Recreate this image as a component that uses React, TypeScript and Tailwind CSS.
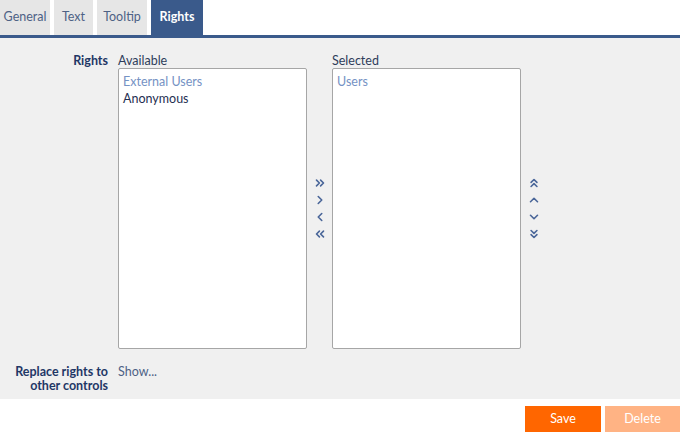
import React from 'react';
import {
  ChevronsRight,
  ChevronRight,
  ChevronLeft,
  ChevronsLeft,
  ChevronsUp,
  ChevronUp,
  ChevronDown,
  ChevronsDown,
} from 'lucide-react';

const tabs = [
  { label: 'General', w: 'w-[50px]' },
  { label: 'Text', w: 'w-[39px]' },
  { label: 'Tooltip', w: 'w-[50px]' },
  { label: 'Rights', w: 'w-[52px]' },
];

const ArrowButton: React.FC<{ children: React.ReactNode }> = ({ children }) => (
  <button className="flex h-[17px] w-[16px] items-center justify-center text-[#4a6699]">{children}</button>
);

const App: React.FC = () => {
  return (
    <div className="flex h-[432px] w-[680px] flex-col overflow-hidden bg-white font-['Lato','Liberation_Sans',sans-serif] text-[12.5px]">
      <div className="flex h-[35px] gap-[4px]">
        {tabs.map((t) => (
          <div
            key={t.label}
            className={
              t.label === 'Rights'
                ? `flex ${t.w} items-center justify-center bg-[#3a5a8b] font-bold text-white`
                : `flex ${t.w} items-center justify-center bg-[#e6e6e6] text-[#4d6185]`
            }
          >
            {t.label}
          </div>
        ))}
      </div>
      <div className="h-[3px] bg-[#3a5a8b]" />

      <main className="h-[362px] bg-[#f0f0f0] pt-[15px]">
        <div className="grid grid-cols-[108px_1fr] gap-x-[10px]">
          <div className="text-right font-bold leading-[15px] text-[#1f3766]">Rights</div>
          <div className="flex">
            <div className="flex flex-col">
              <div className="h-[15px] leading-[15px] text-[#2e3d5a]">Available</div>
              <div className="h-[281px] w-[189px] rounded-[2px] border border-[#a6a6a6] bg-white px-[4px] pt-[4px] leading-[17px]">
                <div className="text-[#7592c4]">External Users</div>
                <div className="text-[#1f2f52]">Anonymous</div>
              </div>
            </div>
            <div className="mt-[15px] flex w-[25px] flex-col items-center justify-center">
              <ArrowButton><ChevronsRight size={14} strokeWidth={2.75} /></ArrowButton>
              <ArrowButton><ChevronRight size={14} strokeWidth={2.75} /></ArrowButton>
              <ArrowButton><ChevronLeft size={14} strokeWidth={2.75} /></ArrowButton>
              <ArrowButton><ChevronsLeft size={14} strokeWidth={2.75} /></ArrowButton>
            </div>
            <div className="flex flex-col">
              <div className="h-[15px] leading-[15px] text-[#2e3d5a]">Selected</div>
              <div className="h-[281px] w-[189px] rounded-[2px] border border-[#a6a6a6] bg-white px-[4px] pt-[4px] leading-[17px]">
                <div className="text-[#7592c4]">Users</div>
              </div>
            </div>
            <div className="mt-[15px] flex w-[26px] flex-col items-center justify-center">
              <ArrowButton><ChevronsUp size={14} strokeWidth={2.75} /></ArrowButton>
              <ArrowButton><ChevronUp size={14} strokeWidth={2.75} /></ArrowButton>
              <ArrowButton><ChevronDown size={14} strokeWidth={2.75} /></ArrowButton>
              <ArrowButton><ChevronsDown size={14} strokeWidth={2.75} /></ArrowButton>
            </div>
          </div>

          <div className="mt-[16px] text-right font-bold leading-[14px] text-[#1f3766]">
            Replace rights to
            <br />
            other controls
          </div>
          <div className="mt-[16px] leading-[14px] text-[#4d6185]">Show...</div>
        </div>
      </main>

      <footer className="flex justify-end gap-[4px] pt-[7px]">
        <button className="h-[26px] w-[76px] bg-[#ff6600] text-white">Save</button>
        <button className="h-[26px] w-[75px] bg-[#ffb384] text-white">Delete</button>
      </footer>
    </div>
  );
};

export default App;
